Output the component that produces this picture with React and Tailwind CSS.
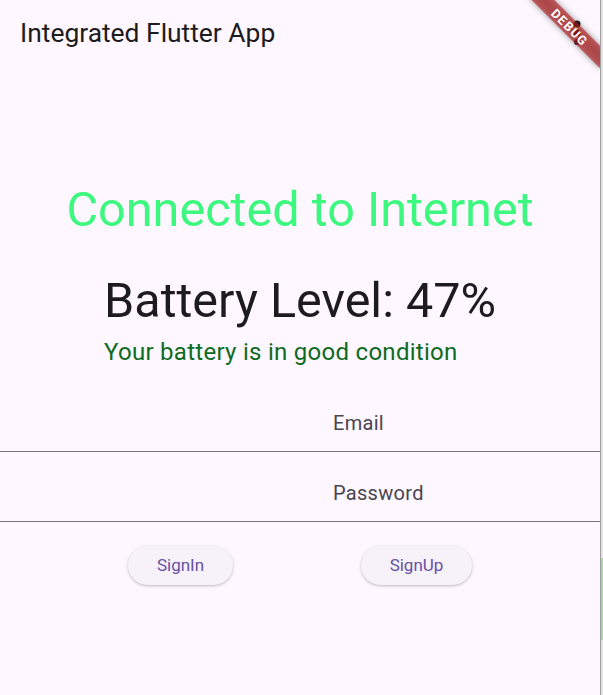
import React from "react";

export default function App() {
  return (
    <div
      className="flex w-[603px] h-[695px] bg-[#fef7ff] overflow-hidden"
      style={{ fontFamily: "Roboto, 'Noto Sans', sans-serif" }}
    >
      <div className="relative w-[600px] h-full flex flex-col overflow-hidden bg-[#fef7ff]">
        {/* App bar */}
        <div className="flex items-start justify-between pt-[17px] pl-[20px] pr-[8px] h-[66px]">
          <div className="text-[26.4px] leading-[32px] text-[#1d1b20]">Integrated Flutter App</div>
          <div className="w-[30px] h-[30px] text-[#1d1b20]">
            <svg viewBox="0 0 30 30" width="30" height="30" fill="currentColor">
              <circle cx="15" cy="7" r="3.5" />
              <circle cx="15" cy="16" r="3.5" />
              <circle cx="15" cy="25" r="3" />
            </svg>
          </div>
        </div>

        {/* Status texts */}
        <div className="flex flex-col items-center mt-[114px]">
          <div className="text-[48.6px] leading-[60px] text-[#3cf87e]">Connected to Internet</div>
          <div className="text-[48.5px] leading-[56px] text-[#1d1b20] mt-[33px]">Battery Level: 47%</div>
        </div>
        <div className="pl-[104px] mt-[9px] text-[24px] leading-[28px] tracking-[0.28px] text-[#0d6b1f]">
          Your battery is in good condition
        </div>

        {/* Fields */}
        <div className="mt-[16px] flex flex-col">
          <div className="h-[70px] flex flex-col justify-end border-b border-[#79747e]">
            <div className="pl-[333px] pb-[16px] text-[20px] leading-[24px] tracking-[0.3px] text-[#49454f]">Email</div>
          </div>
          <div className="h-[70px] flex flex-col justify-end border-b border-[#79747e]">
            <div className="pl-[333px] pb-[16px] text-[20px] leading-[24px] tracking-[0.3px] text-[#49454f]">Password</div>
          </div>
        </div>

        {/* Buttons */}
        <div className="mt-[24px] flex justify-evenly">
          <button className="w-[105px] h-[39px] rounded-full bg-[#f7f2fa] text-[#6750a4] text-[17px] shadow-[0_1px_3px_rgba(0,0,0,0.25)]">
            SignIn
          </button>
          <button className="w-[111px] h-[39px] rounded-full bg-[#f7f2fa] text-[#6750a4] text-[17px] shadow-[0_1px_3px_rgba(0,0,0,0.25)]">
            SignUp
          </button>
        </div>

        {/* Debug banner */}
        <div className="absolute left-[520px] top-[19px] w-[100px] h-[16px] rotate-45">
          <div className="absolute inset-0 bg-black/40 blur-[3px]" />
          <div className="absolute inset-0 bg-[#b71c1c]/[0.63] flex items-center justify-center">
            <span className="text-white font-bold text-[12.5px] leading-[15px] tracking-[1.25px]">DEBUG</span>
          </div>
        </div>
      </div>
      <div className="w-[1px] h-full bg-[#9e9e9e]" />
      <div className="w-[2px] h-full flex flex-col bg-[#e4e4e4]">
        <div className="h-[558px]" />
        <div className="h-[82px] bg-[#a9d3a0]" />
      </div>
    </div>
  );
}
